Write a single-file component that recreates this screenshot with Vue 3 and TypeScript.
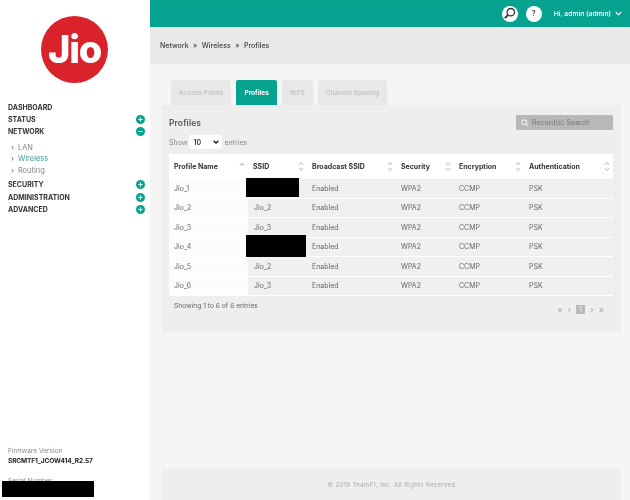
<script setup lang="ts">
import { ref } from 'vue'

type Row = { name: string; ssid: string; hidden: '' | 'short' | 'long' }

const tabs = [
  { label: 'Access Points', active: false },
  { label: 'Profiles', active: true },
  { label: 'WPS', active: false },
  { label: 'Channel Spacing', active: false },
]

const columns = ['SSID', 'Broadcast SSID', 'Security', 'Encryption', 'Authentication']

const rows = ref<Row[]>([
  { name: 'Jio_1', ssid: '', hidden: 'short' },
  { name: 'Jio_2', ssid: 'Jio_2', hidden: '' },
  { name: 'Jio_3', ssid: 'Jio_3', hidden: '' },
  { name: 'Jio_4', ssid: '', hidden: 'long' },
  { name: 'Jio_5', ssid: 'Jio_2', hidden: '' },
  { name: 'Jio_6', ssid: 'Jio_3', hidden: '' },
])
</script>

<template>
  <div class="page">
    <aside class="sidebar">
      <div class="logo"><span>Jio</span></div>
      <nav class="nav">
        <div class="nav-item">DASHBOARD</div>
        <div class="nav-item">STATUS<span class="toggle">+</span></div>
        <div class="nav-item">NETWORK<span class="toggle">−</span></div>
        <ul class="subnav">
          <li>LAN</li>
          <li class="current">Wireless</li>
          <li>Routing</li>
        </ul>
        <div class="nav-item">SECURITY<span class="toggle">+</span></div>
        <div class="nav-item">ADMINISTRATION<span class="toggle">+</span></div>
        <div class="nav-item">ADVANCED<span class="toggle">+</span></div>
      </nav>
      <div class="device">
        <div class="device-label">Firmware Version</div>
        <div class="device-value">SRCMTF1_JCOW414_R2.57</div>
        <div class="device-label serial">Serial Number</div>
        <div class="redacted serial-mask"></div>
      </div>
    </aside>

    <div class="main">
      <header class="topbar">
        <span class="round-btn">
          <svg width="13" height="13" viewBox="0 0 13 13" fill="none" stroke="#333" stroke-width="1.3">
            <circle cx="7.8" cy="5.2" r="3.7" />
            <path d="M5 8 1.8 11.2" stroke-width="1.9" />
          </svg>
        </span>
        <span class="round-btn help">?</span>
        <span class="user">Hi, admin (admin)</span>
        <svg class="user-caret" width="7" height="5" viewBox="0 0 7 5" fill="none" stroke="#fff" stroke-width="1.1">
          <path d="M.8 1 3.5 3.8 6.2 1" />
        </svg>
      </header>

      <div class="crumbs">
        <span>Network</span><b>»</b><span>Wireless</span><b>»</b><span>Profiles</span>
      </div>

      <section class="content">
        <div class="tabs">
          <div v-for="tab in tabs" :key="tab.label" class="tab" :class="{ active: tab.active }">{{ tab.label }}</div>
        </div>

        <div class="panel">
          <div class="panel-head">
            <h2>Profiles</h2>
            <div class="search">
              <svg width="8" height="8" viewBox="0 0 8 8" fill="none" stroke="#e8e8e8" stroke-width="1.2">
                <circle cx="3.3" cy="3.3" r="2.4" />
                <path d="M5 5 7.4 7.4" />
              </svg>
              Record(s) Search
            </div>
          </div>

          <div class="length">
            Show
            <span class="select">10
              <svg width="6" height="4" viewBox="0 0 6 4" fill="none" stroke="#222" stroke-width="1.4">
                <path d="M.6.8 3 3.1 5.4.8" />
              </svg>
            </span>
            entries
          </div>

          <table>
            <colgroup>
              <col style="width: 79px" />
              <col style="width: 59px" />
              <col style="width: 89px" />
              <col style="width: 58px" />
              <col style="width: 70px" />
              <col style="width: 89px" />
            </colgroup>
            <thead>
              <tr>
                <th>
                  Profile Name
                  <svg class="sort" width="6" height="11" viewBox="0 0 6 11" fill="none" stroke="#777" stroke-width=".8">
                    <path d="M1 4.5 3 2.5 5 4.5" />
                  </svg>
                </th>
                <th v-for="col in columns" :key="col">
                  {{ col }}
                  <svg class="sort" width="6" height="11" viewBox="0 0 6 11" fill="none" stroke="#aaa" stroke-width=".8">
                    <path d="M1 4 3 1.5 5 4M1 7 3 9.5 5 7" />
                  </svg>
                </th>
              </tr>
            </thead>
            <tbody>
              <tr v-for="row in rows" :key="row.name">
                <td class="first">{{ row.name }}</td>
                <td class="ssid">
                  {{ row.ssid }}
                  <div v-if="row.hidden" class="redacted" :class="row.hidden"></div>
                </td>
                <td>Enabled</td>
                <td>WPA2</td>
                <td>CCMP</td>
                <td>PSK</td>
              </tr>
            </tbody>
          </table>

          <div class="table-foot">
            <span class="info">Showing 1 to 6 of 6 entries</span>
            <div class="pager">
              <span>«</span><span>‹</span><span class="num">1</span><span>›</span><span>»</span>
            </div>
          </div>
        </div>
      </section>

      <footer class="footer">© 2019 TeamF1, Inc. All Rights Reserved</footer>
    </div>
  </div>
</template>

<style>
html,
body {
  margin: 0;
  overflow: hidden;
  background: #fff;
}
</style>

<style scoped>
.page {
  display: flex;
  width: 630px;
  height: 500px;
  overflow: hidden;
  font-family: Inter, 'Liberation Sans', sans-serif;
  color: #555;
  will-change: transform;
}

.sidebar {
  position: relative;
  flex: 0 0 150px;
  display: flex;
  flex-direction: column;
}

.logo {
  width: 67px;
  height: 67px;
  margin: 16px 0 0 41px;
  border-radius: 50%;
  background: #d9222a;
  display: flex;
  align-items: center;
  justify-content: center;
}

.logo span {
  font-size: 38px;
  font-weight: 800;
  line-height: 1;
  letter-spacing: -1.2px;
  color: #fff;
  margin-top: -1px;
}

.nav {
  margin-top: 18px;
  padding: 0 5px 0 8px;
}

.nav-item {
  display: flex;
  align-items: center;
  justify-content: space-between;
  height: 12.4px;
  font-size: 7px;
  font-weight: 700;
  color: #333;
}

.toggle {
  width: 9px;
  height: 9px;
  border-radius: 50%;
  background: #06a290;
  color: #fff;
  font-size: 8px;
  line-height: 9px;
  text-align: center;
  font-weight: 700;
}

.subnav {
  list-style: none;
  margin: 4px 0 3px;
  padding: 0 0 0 3px;
  font-size: 7.5px;
  color: #888;
}

.subnav li {
  height: 11.2px;
  line-height: 11.2px;
}

.subnav li::before {
  content: '›';
  margin-right: 4px;
  color: #666;
}

.subnav .current {
  color: #3f9a94;
}

.device {
  position: relative;
  margin-top: auto;
  padding: 0 0 14px 8px;
  font-size: 6.6px;
}

.device-label {
  color: #888;
  line-height: 10px;
}

.device-value {
  color: #222;
  font-weight: 700;
  line-height: 10px;
  letter-spacing: -0.15px;
}

.serial {
  margin-top: 10px;
}

.redacted {
  position: absolute;
  background: #000;
}

.serial-mask {
  left: 2px;
  bottom: 3px;
  width: 92px;
  height: 16px;
}

.main {
  flex: 1;
  display: flex;
  flex-direction: column;
  background: #f5f5f5;
}

.topbar {
  height: 27px;
  flex: none;
  display: flex;
  align-items: center;
  justify-content: flex-end;
  padding-right: 8px;
  background: #06a290;
  color: #fff;
  font-size: 6.8px;
  font-weight: 500;
}

.round-btn {
  width: 16px;
  height: 16px;
  border-radius: 50%;
  background: #fff;
  display: flex;
  align-items: center;
  justify-content: center;
  margin-right: 8px;
}

.help {
  color: #555;
  font-size: 7px;
  font-weight: 700;
  margin-right: 12px;
}

.user-caret {
  margin-left: 4px;
}

.crumbs {
  height: 37px;
  flex: none;
  display: flex;
  align-items: center;
  gap: 4.5px;
  padding-left: 10px;
  background: #e8e8e8;
  font-size: 7px;
  font-weight: 500;
  color: #444;
}

.crumbs b {
  font-weight: 500;
}

.content {
  flex: 1;
  padding: 16px 9px 0 12px;
}

.tabs {
  display: flex;
  gap: 5px;
  padding-left: 9px;
}

.tab {
  height: 25px;
  padding: 0 8px;
  display: flex;
  align-items: center;
  background: #e8e8e8;
  color: #c4c4c4;
  font-size: 6.5px;
  font-weight: 600;
  border-radius: 2px 2px 0 0;
}

.tab.active {
  background: #06a290;
  color: #fff;
  font-weight: 700;
}

.panel {
  height: 227px;
  box-sizing: border-box;
  padding: 10px 8px 0 7px;
  background: #eee;
}

.panel-head {
  display: flex;
  align-items: center;
  justify-content: space-between;
  height: 15px;
}

.panel-head h2 {
  margin: 0;
  font-size: 8.5px;
  font-weight: 600;
  letter-spacing: 0.1px;
  color: #555;
}

.search {
  width: 97px;
  height: 15px;
  box-sizing: border-box;
  padding-left: 5px;
  display: flex;
  align-items: center;
  gap: 3px;
  border-radius: 1px;
  background: #b8b8b8;
  color: #777;
  font-size: 7px;
}

.length {
  display: flex;
  align-items: center;
  height: 14px;
  margin-top: 5px;
  font-size: 7px;
  color: #888;
}

.select {
  width: 33px;
  height: 14px;
  box-sizing: border-box;
  margin: 0 2px 0 2px;
  padding: 0 3px 0 4px;
  display: flex;
  align-items: center;
  justify-content: space-between;
  border-radius: 2px;
  background: #fff;
  color: #333;
  font-weight: 600;
}

table {
  width: 444px;
  margin-top: 5px;
  table-layout: fixed;
  border-collapse: collapse;
  background: #fff;
  font-size: 7px;
}

th {
  position: relative;
  height: 25px;
  padding: 0 0 0 5px;
  text-align: left;
  font-weight: 700;
  color: #333;
  background: #fff;
}

th .sort {
  position: absolute;
  right: 3px;
  top: 7px;
}

td {
  position: relative;
  height: 18.5px;
  padding: 0 0 0 5px;
  border-bottom: 1px solid #fff;
  background: #f0f0f0;
  color: #666;
}

td.first {
  background: #fcfcfc;
}

td.ssid {
  padding-left: 6px;
}

.short {
  left: -2px;
  top: -1px;
  width: 53px;
  height: 19px;
}

.long {
  left: -2px;
  top: -3px;
  width: 60px;
  height: 22px;
}

.table-foot {
  display: flex;
  justify-content: space-between;
  padding: 6px 9px 0 5px;
  font-size: 6.7px;
  color: #666;
}

.pager {
  display: flex;
  align-items: center;
  gap: 5px;
  margin-top: 3px;
  color: #aaa;
  font-size: 9px;
  line-height: 9px;
}

.pager .num {
  width: 9px;
  height: 9px;
  background: #bbb;
  color: #eee;
  font-size: 7px;
  text-align: center;
}

.footer {
  height: 31px;
  flex: none;
  margin: 0 9px 0 12px;
  display: flex;
  align-items: center;
  justify-content: center;
  background: #eee;
  color: #aaa;
  font-size: 6px;
  letter-spacing: 0.35px;
}
</style>
